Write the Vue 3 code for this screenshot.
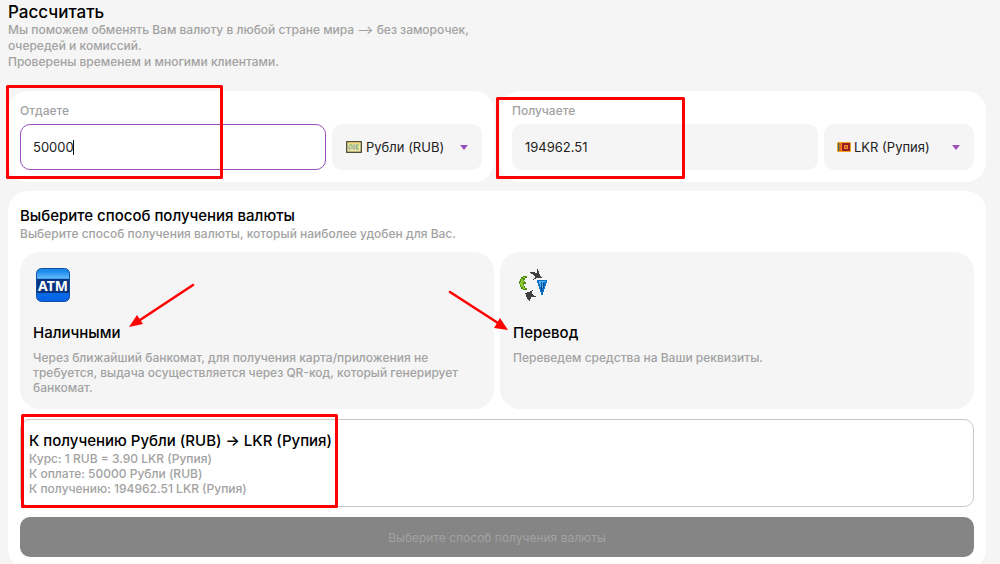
<script setup>
import { ref } from 'vue'

const amount = ref('50000')
const result = ref('194962.51')
const from = ref('Рубли (RUB)')
const to = ref('LKR (Рупия)')
</script>

<template>
  <main class="page">
    <header class="intro">
      <h1>Рассчитать</h1>
      <p class="muted">Мы поможем обменять Вам валюту в любой стране мира --&gt; без заморочек,<br>очередей и комиссий.<br>Проверены временем и многими клиентами.</p>
    </header>

    <div class="pair">
      <section class="panel">
        <label class="muted" for="give">Отдаете</label>
        <div class="row">
          <div class="field">
            <input id="give" v-model="amount" class="active" type="text" inputmode="decimal">
            <span class="caret"></span>
          </div>
          <div class="picker">
            <svg class="note" width="16" height="16" viewBox="0 0 16 16" aria-hidden="true">
              <rect x=".7" y="2.7" width="14.6" height="10.6" fill="#efe7a4" stroke="#3c3d2c" stroke-width="1.2" />
              <path d="M1.5 4H14.5" stroke="#f4c65e" />
              <path d="M3 6H6V10M10 6H13M10 8H12M10 10H13" fill="none" stroke="#6dab62" />
              <path d="M3 7V10H5M8 5V11M10 6V10" fill="none" stroke="#8b9cab" />
            </svg>
            <select v-model="from" aria-label="Валюта оплаты"><option>Рубли (RUB)</option></select>
            <span class="arrow"></span>
          </div>
        </div>
      </section>

      <section class="panel">
        <label class="muted" for="receive">Получаете</label>
        <div class="row">
          <div class="field">
            <input id="receive" v-model="result" type="text" readonly>
          </div>
          <div class="picker">
            <svg class="flag" width="14" height="12" viewBox="0 0 14 12" aria-hidden="true">
              <rect y="1" width="14" height="10" rx="1" fill="#f6a51b" />
              <path d="M1 2H2.500V10H1Z" fill="#38645a" /><path d="M2.500 2H4.500V10H2.500Z" fill="#ed6424" />
              <path d="M5 2H13V10H5Z" fill="#941f2b" />
              <rect x="7" y="4" width="4" height="4" fill="#f08b25" />
              <path d="M8 6H10" stroke="#941f2b" />
            </svg>
            <select v-model="to" class="lkr" aria-label="Валюта получения"><option>LKR (Рупия)</option></select>
            <span class="arrow"></span>
          </div>
        </div>
      </section>
    </div>

    <section class="methods">
      <h2>Выберите способ получения валюты</h2>
      <p class="muted hint">Выберите способ получения валюты, который наиболее удобен для Вас.</p>
      <div class="pair options">
        <button class="option" type="button">
          <svg width="40" height="40" viewBox="0 0 40 40" aria-hidden="true">
            <defs>
              <linearGradient id="shine" x1="0" y1="0" x2="0" y2="1">
                <stop offset="0" stop-color="#1a86e4" /><stop offset=".1" stop-color="#1d8deb" />
                <stop offset=".28" stop-color="#63b8fb" />
                <stop offset=".34" stop-color="#0874dc" /><stop offset="1" stop-color="#0862ea" />
              </linearGradient>
            </defs>
            <rect x="3.5" y="3.5" width="33" height="33" rx="5" fill="url(#shine)" stroke="#124fa0" />
            <rect x="4" y="14" width="32" height="14" fill="#063480" />
            <text x="20" y="26" text-anchor="middle" class="atm">ATM</text>
          </svg>
          <strong>Наличными</strong>
          <span class="muted">Через ближайший банкомат, для получения карта/приложения не<br>требуется, выдача осуществляется через QR-код, который генерирует<br>банкомат.</span>
        </button>
        <button class="option" type="button">
          <svg width="40" height="40" viewBox="0 0 40 40" shape-rendering="crispEdges" aria-hidden="true">
            <path d="M17 7L20 7L24 8L24 4H25L27 10L29 13L24 13L20 15L22 12L21 10L17 8Z" fill="#3f4041" />
            <path d="M10 11H14V13H12V15H11V17H13V19H11V21H12V23H14V25H10V24H8V22H7V19H6V16H7V14H8V12H10Z" fill="#4f8a12" />
            <path d="M10 12H12V13H10V16H12V17H10V20H11V23H12V24H10V22H8V20H7V17H8V14H10Z" fill="#8cc832" />
            <path d="M24 15H34V18H33V21H32V24H31V27H30V30H28V27H27V24H26V21H25V18H24Z" fill="#0870c4" />
            <path d="M26 16H33V17H30V23H29V17H28V22H27V19H26Z" fill="#55b0f2" />
            <path d="M28 18H29V26H28ZM30 18H31V23H30Z" fill="#0b4688" />
            <path d="M12 28L16 27L20 25L19 28L21 31L24 32L18 32L17 36L14 34L13 30Z" fill="#3f4041" />
          </svg>
          <strong>Перевод</strong>
          <span class="muted">Переведем средства на Ваши реквизиты.</span>
        </button>
      </div>
      <div class="summary">
        <h2>К получению {{ from }} → {{ to }}</h2>
        <p class="muted">Курс: 1 RUB = 3.90 {{ to }}<br>К оплате: {{ amount }} {{ from }}<br>К получению: {{ result }} {{ to }}</p>
      </div>
      <button class="submit" type="button" disabled>Выберите способ получения валюты</button>
    </section>

    <svg class="marks" width="1000" height="564" viewBox="0 0 1000 564" aria-hidden="true">
      <g fill="none" stroke="#f00" stroke-width="3" stroke-linejoin="round" stroke-linecap="round">
        <rect x="7.5" y="86.500" width="214" height="91" />
        <rect x="497.500" y="98.500" width="186" height="79" />
        <rect x="22.500" y="415.500" width="314" height="91" />
        <path d="M193 285L140 320M450 292L498 323" stroke-width="2.6" />
      </g>
      <path d="M129 327L137 315L143 324ZM508 330L494 328L500 318Z" fill="#f00" />
    </svg>
  </main>
</template>

<style>
body { margin: 0; background: #f5f5f5; }
</style>

<style scoped>
* { box-sizing: border-box; }
.page { position: relative; padding: 3px 14px 0 8px; overflow: hidden; font-family: Inter, "Open Sans", sans-serif; color: #000; }
h1, h2, p { margin: 0; font-weight: 500; }
h1 { font-size: 17px; line-height: 19px; }
h2, strong { font-size: 15px; line-height: 20px; font-weight: 500; }
.muted { color: #a2a2a2; font-size: 12px; line-height: 15px; font-weight: 500; }
.intro { min-height: 88px; }
.intro .muted, .hint { line-height: 16px; }
.pair { display: grid; grid-template-columns: 1fr 1fr; gap: 6px; }
.panel { height: 91px; padding: 12px; background: #fff; border-radius: 20px; }
.panel label { display: block; height: 21px; }
.row { display: flex; gap: 6px; }
.field { position: relative; flex: 1; min-width: 0; }
input, select { width: 100%; height: 46px; margin: 0; border: 1px solid transparent; border-radius: 10px; background: #f5f5f5; color: #222; font: 400 13px/18px Inter, sans-serif; outline: none; }
input { display: block; padding: 0 12px; }
input.active { background: #fff; border-color: #9b50b8; }
.caret { position: absolute; left: 53px; top: 16px; width: 1px; height: 15px; background: #111; }
.picker { position: relative; width: 150px; flex: none; }
select { appearance: none; padding: 0 26px 0 33px; }
select.lkr { padding-left: 29px; }
.note, .flag { position: absolute; left: 14px; top: 15px; }
.flag { left: 13px; top: 17px; }
.arrow { position: absolute; right: 14px; top: 21px; border: solid transparent; border-width: 5px 4px 0; border-top-color: #9b50b8; pointer-events: none; }
.methods { margin-top: 9px; padding: 15px 12px 12px; border-radius: 20px; background: #fff; }
.options { margin-top: 10px; }
button { font-family: inherit; }
.option { display: flex; flex-direction: column; align-items: flex-start; min-height: 157px; padding: 13px; border: 0; border-radius: 20px; background: #f5f5f5; text-align: left; color: #000; }
.option strong { margin: 18px 0 7px; }
.atm { font: 700 14px "Noto Sans", sans-serif; fill: #fff; }
.summary { min-height: 88px; margin-top: 10px; padding: 10px 8px; border: 1px solid #c8c8c8; border-radius: 10px; }
.summary h2 { line-height: 21px; }
.submit { display: block; width: 100%; height: 40px; margin-top: 10px; border: 0; border-radius: 10px; background: #858585; color: #a2a2a2; font-size: 12px; font-weight: 400; }
.marks { position: absolute; left: 0; top: 0; pointer-events: none; }
</style>
